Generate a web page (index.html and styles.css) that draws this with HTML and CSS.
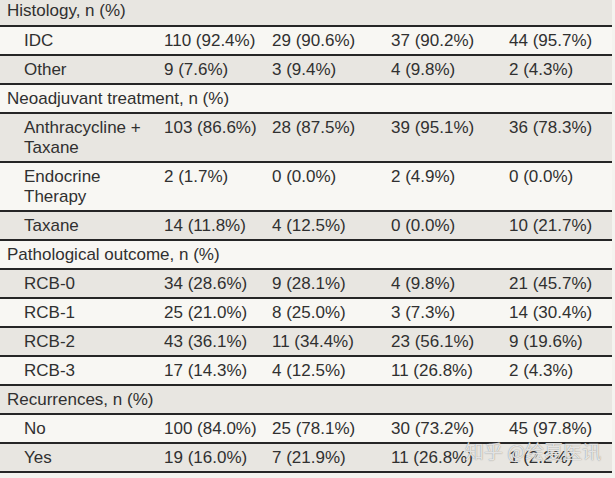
FILE: index.html
```html
<!DOCTYPE html>
<html>
<head>
<meta charset="utf-8">
<link rel="stylesheet" href="styles.css">
</head>
<body>
<div class="page">
<table class="tbl">
  <colgroup>
    <col class="c1"><col class="c2"><col class="c3"><col class="c4"><col class="c5">
  </colgroup>
  <tr class="grey head first"><td colspan="5">Histology, n (%)</td></tr>
  <tr class="white"><td class="sub">IDC</td><td>110 (92.4%)</td><td>29 (90.6%)</td><td>37 (90.2%)</td><td>44 (95.7%)</td></tr>
  <tr class="grey"><td class="sub">Other</td><td>9 (7.6%)</td><td>3 (9.4%)</td><td>4 (9.8%)</td><td>2 (4.3%)</td></tr>
  <tr class="white head"><td colspan="5">Neoadjuvant treatment, n (%)</td></tr>
  <tr class="grey"><td class="sub">Anthracycline + Taxane</td><td>103 (86.6%)</td><td>28 (87.5%)</td><td>39 (95.1%)</td><td>36 (78.3%)</td></tr>
  <tr class="white"><td class="sub">Endocrine Therapy</td><td>2 (1.7%)</td><td>0 (0.0%)</td><td>2 (4.9%)</td><td>0 (0.0%)</td></tr>
  <tr class="grey"><td class="sub">Taxane</td><td>14 (11.8%)</td><td>4 (12.5%)</td><td>0 (0.0%)</td><td>10 (21.7%)</td></tr>
  <tr class="white head"><td colspan="5">Pathological outcome, n (%)</td></tr>
  <tr class="grey"><td class="sub">RCB-0</td><td>34 (28.6%)</td><td>9 (28.1%)</td><td>4 (9.8%)</td><td>21 (45.7%)</td></tr>
  <tr class="white"><td class="sub">RCB-1</td><td>25 (21.0%)</td><td>8 (25.0%)</td><td>3 (7.3%)</td><td>14 (30.4%)</td></tr>
  <tr class="grey"><td class="sub">RCB-2</td><td>43 (36.1%)</td><td>11 (34.4%)</td><td>23 (56.1%)</td><td>9 (19.6%)</td></tr>
  <tr class="white"><td class="sub">RCB-3</td><td>17 (14.3%)</td><td>4 (12.5%)</td><td>11 (26.8%)</td><td>2 (4.3%)</td></tr>
  <tr class="grey head"><td colspan="5">Recurrences, n (%)</td></tr>
  <tr class="white"><td class="sub">No</td><td>100 (84.0%)</td><td>25 (78.1%)</td><td>30 (73.2%)</td><td>45 (97.8%)</td></tr>
  <tr class="grey"><td class="sub">Yes</td><td>19 (16.0%)</td><td>7 (21.9%)</td><td>11 (26.8%)</td><td>1 (2.2%)</td></tr>
</table>
<div class="watermark">知乎 @绘夏医讯</div>
</div>
</body>
</html>
```
FILE: styles.css
```css
html, body {
  margin: 0;
  padding: 0;
  background: #f4f3ef;
}
.page {
  position: relative;
  width: 615px;
  height: 478px;
  overflow: hidden;
}
.tbl {
  width: 612px;
  border-collapse: collapse;
  table-layout: fixed;
  font-family: "Liberation Sans", Arial, sans-serif;
  font-size: 17px;
  color: #303030;
}
.c1 { width: 157px; }
.c2 { width: 108px; }
.c3 { width: 119px; }
.c4 { width: 118px; }
.c5 { width: 110px; }
.tbl td {
  padding: 4px 7px 3px 7px;
  line-height: 20px;
  vertical-align: top;
  border-bottom: 2px solid #262626;
}
.tbl td.sub {
  padding-left: 24px;
}
.tbl tr.first td {
  padding-top: 1px;
  padding-bottom: 4px;
}
.grey { background: #e8e6e1; }
.white { background: #f8f7f3; }
.watermark {
  position: absolute;
  left: 465px;
  top: 439px;
  font-family: "Noto Sans CJK SC", sans-serif;
  font-size: 19px;
  line-height: 24px;
  color: rgba(255, 255, 255, 0.78);
  text-shadow: 0 0 1px rgba(90, 90, 90, 0.8);
  white-space: nowrap;
}
```
